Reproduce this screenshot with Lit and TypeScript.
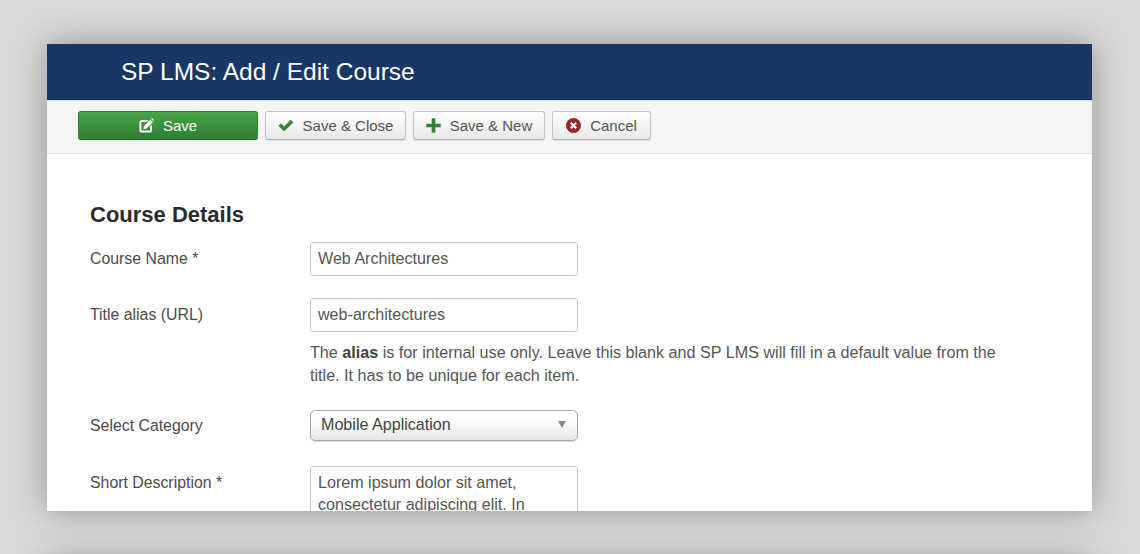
import { LitElement, html, css, svg } from "lit";
import { customElement } from "lit/decorators.js";

const editIcon = svg`<svg width="15" height="15" viewBox="0 0 15 15"><path d="M2.4 2H9.4L7.4 4H2.4V12.6H11V8.4L13 6.4V12.4A2.2 2.2 0 0 1 10.8 14.6H2.6A2.2 2.2 0 0 1 .4 12.4V4.2A2.2 2.2 0 0 1 2.4 2z" fill="#fff"/><path d="M11.4 1.6l2.6 2.6-6.4 6.4-3.2.6.6-3.2zM12.2.8l.8-.8 2 2-.8.9z" fill="#fff"/></svg>`;
const checkIcon = svg`<svg width="16" height="13" viewBox="0 0 16 13"><path d="M.5 6.8l2.4-2.4 3.2 3.1L12.8.8 15.4 3.3l-9.3 9.3z" fill="#378137"/></svg>`;
const plusIcon = svg`<svg width="15" height="15" viewBox="0 0 15 15"><path d="M5.7 0.3h3.6v5.4h5.4v3.6h-5.4v5.4h-3.6v-5.4H.3V5.7h5.4z" fill="#378137"/></svg>`;
const cancelIcon = svg`<svg width="15" height="15" viewBox="0 0 15 15"><circle cx="7.5" cy="7.5" r="7.5" fill="#942a25"/><path d="M4.8 4.8l5.4 5.4M10.2 4.8l-5.4 5.4" stroke="#fff" stroke-width="2.1" fill="none"/></svg>`;

@customElement("app-root")
export class AppRoot extends LitElement {
  static styles = css`
    :host {
      display: block;
      width: 1140px;
      height: 554px;
      overflow: hidden;
      background: #d9d9d9;
      font-family: "Liberation Sans", Arial, sans-serif;
      font-size: 16.1px;
      color: #555;
    }
    .page {
      display: flex;
      flex-direction: column;
      gap: 50px;
      padding: 44px 48px 0 47px;
    }
    .card {
      flex: none;
      background: #fff;
      box-shadow: 0 0 32px rgba(0, 0, 0, 0.32);
    }
    .main {
      height: 467px;
      overflow: hidden;
    }
    .ghost {
      height: 100px;
    }
    .header {
      height: 55px;
      background: #183764;
      border-bottom: 1px solid #13305a;
      padding-left: 74px;
      display: flex;
      align-items: center;
      color: #fff;
      font-size: 24.5px;
    }
    .toolbar {
      height: 54px;
      box-sizing: border-box;
      background: #f5f5f5;
      border-top: 1px solid #d4d8e0;
      border-bottom: 1px solid #e3e3e3;
      padding: 0 0 3px 31px;
      display: flex;
      align-items: center;
      gap: 7px;
    }
    .btn {
      height: 29px;
      box-sizing: border-box;
      display: flex;
      align-items: center;
      justify-content: center;
      gap: 9px;
      border: 1px solid #c4c4c4;
      border-bottom-color: #b0b0b0;
      border-radius: 3px;
      background: linear-gradient(#fff, #e8e8e8);
      box-shadow: 0 1px 1px rgba(0, 0, 0, 0.08);
      color: #555;
      font-size: 15px;
    }
    .btn svg {
      display: block;
    }
    .save {
      width: 180px;
      background: linear-gradient(#46a546, #2f7d32);
      border-color: #2f7d32;
      border-bottom-color: #256428;
      color: #fff;
    }
    .close { width: 141px; }
    .new { width: 132px; }
    .cancel { width: 99px; }
    .body {
      padding: 47px 43px 0;
    }
    h2 {
      margin: 0;
      font-size: 22px;
      line-height: 28px;
      font-weight: 700;
      color: #2b2b2b;
    }
    .row {
      display: grid;
      grid-template-columns: 220px 1fr;
      align-items: start;
    }
    .row label {
      line-height: 20px;
      padding-top: 7px;
      font-size: 15.85px;
      color: #4a4a4a;
    }
    .r1 { margin-top: 13px; }
    .r2 { margin-top: 22px; }
    .r3 { margin-top: 23px; }
    .r3 label { padding-top: 6px; }
    .r4 { margin-top: 25px; }
    .field {
      width: 268px;
      height: 34px;
      box-sizing: border-box;
      border: 1px solid #ccc;
      border-radius: 3px;
      padding: 0 7px;
      line-height: 30px;
      color: #555;
      background: #fff;
      box-shadow: inset 0 1px 1px rgba(0, 0, 0, 0.05);
    }
    .help {
      margin: 9px 0 0;
      width: 700px;
      line-height: 23px;
      font-size: 16.15px;
      color: #555;
    }
    .help b { color: #444; }
    .select {
      width: 268px;
      height: 31px;
      box-sizing: border-box;
      border: 1px solid #aaa;
      border-radius: 5px;
      padding: 0 10px 3px;
      display: flex;
      align-items: center;
      justify-content: space-between;
      background: linear-gradient(#fff 25%, #e6e6e6);
      box-shadow: 0 1px 1px rgba(0, 0, 0, 0.15);
      color: #444;
    }
    .select span:last-child {
      width: 0;
      height: 0;
      margin-right: 1px;
      border-left: 4.5px solid transparent;
      border-right: 4.5px solid transparent;
      border-top: 7px solid #888;
    }
    .text {
      width: 268px;
      height: 90px;
      box-sizing: border-box;
      border: 1px solid #ccc;
      border-radius: 3px;
      padding: 4px 7px;
      line-height: 22px;
      color: #555;
    }
  `;

  render() {
    return html`
      <div class="page">
        <div class="card main">
          <div class="header">SP LMS: Add / Edit Course</div>
          <div class="toolbar">
            <div class="btn save">${editIcon}<span>Save</span></div>
            <div class="btn close">${checkIcon}<span>Save &amp; Close</span></div>
            <div class="btn new">${plusIcon}<span>Save &amp; New</span></div>
            <div class="btn cancel">${cancelIcon}<span>Cancel</span></div>
          </div>
          <div class="body">
            <h2>Course Details</h2>
            <div class="row r1">
              <label>Course Name *</label>
              <div class="field">Web Architectures</div>
            </div>
            <div class="row r2">
              <label>Title alias (URL)</label>
              <div>
                <div class="field">web-architectures</div>
                <p class="help">The <b>alias</b> is for internal use only. Leave this blank and SP LMS will fill in a default value from the title. It has to be unique for each item.</p>
              </div>
            </div>
            <div class="row r3">
              <label>Select Category</label>
              <div class="select"><span>Mobile Application</span><span></span></div>
            </div>
            <div class="row r4">
              <label>Short Description *</label>
              <div class="text">Lorem ipsum dolor sit amet, consectetur adipiscing elit. In</div>
            </div>
          </div>
        </div>
        <div class="card ghost"></div>
      </div>
    `;
  }
}
